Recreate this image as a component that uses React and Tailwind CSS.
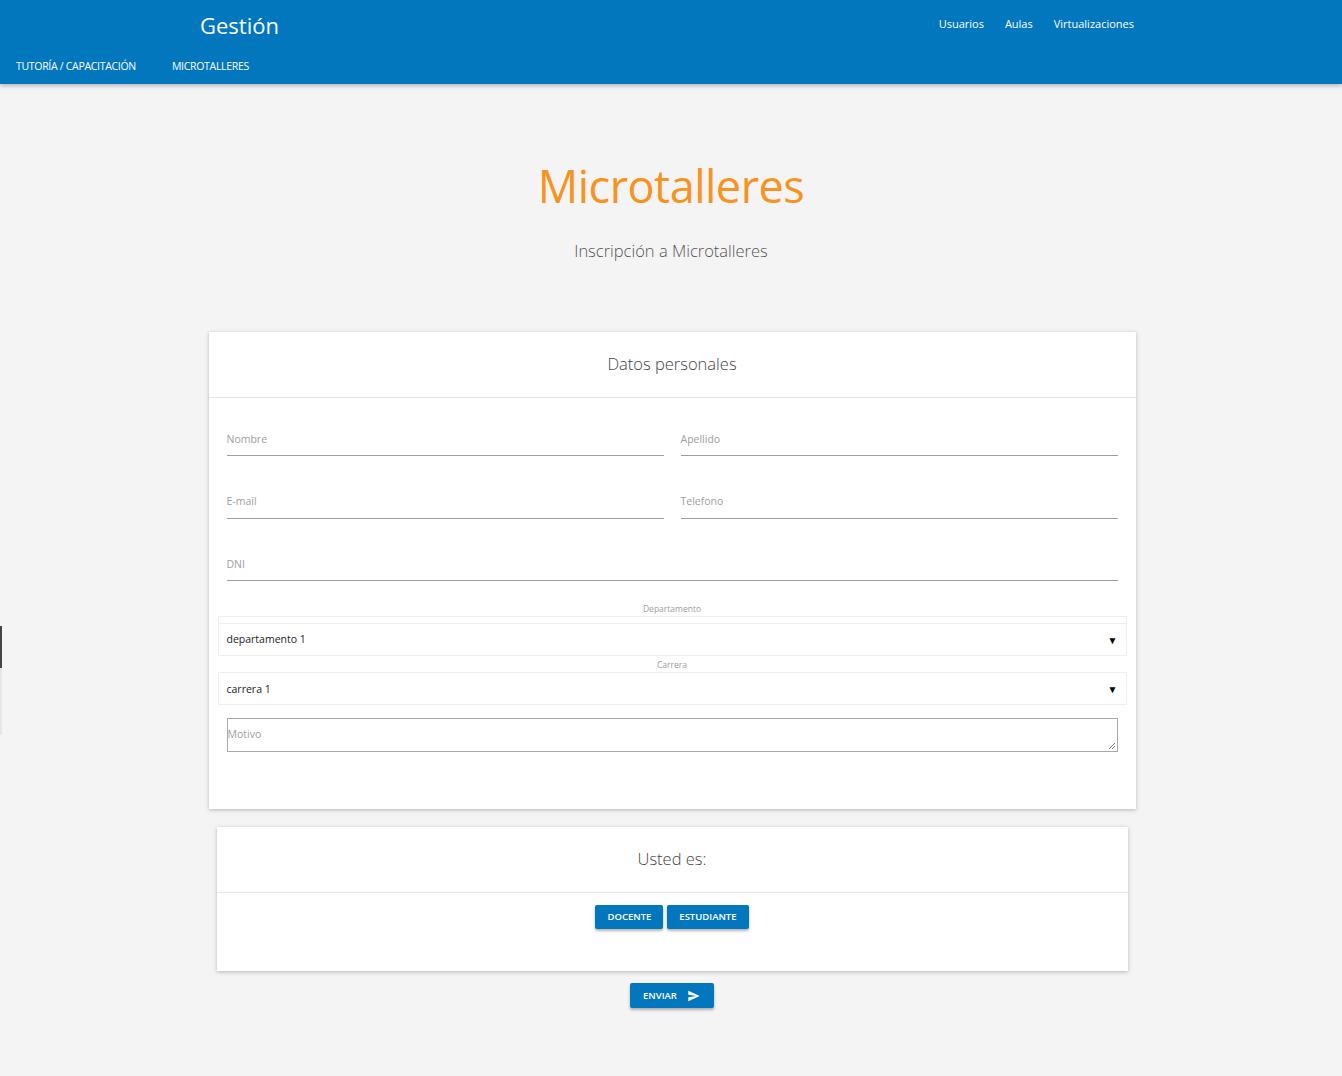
import { IoMdSend } from "react-icons/io";

const font = { fontFamily: '"Open Sans", "Noto Sans", sans-serif' };

const Field = ({ label, className = "" }) => (
  <div className={`flex flex-col ${className}`}>
    <span className="text-[10.5px] text-[#9e9e9e] leading-none pb-[11px] pt-[1px]">{label}</span>
    <div className="border-b border-[#9e9e9e]" />
  </div>
);

const Select = ({ label, value, first }) => (
  <div className="flex flex-col">
    <div className={`text-center text-[8.5px] text-[#9e9e9e] leading-none ${first ? "pb-[2px]" : "pb-[3px]"}`}>{label}</div>
    {first && <div className="h-[7px] mx-[9px] border-t border-x border-[#f0f0f0]" />}
    <div className="mx-[9px] h-[33px] border border-[#eeeeee] flex items-center justify-between px-[8px] pt-[2px]">
      <span className="text-[10.5px] text-[#222]">{value}</span>
      <span className="text-[10px] text-black">▼</span>
    </div>
  </div>
);

export default function App() {
  return (
    <div className="min-h-[1076px] bg-[#f4f4f4] relative" style={font}>
      <header className="bg-[#0277bd] h-[84px] shadow-[0_2px_4px_rgba(0,0,0,0.25)] flex flex-col text-white">
        <div className="flex items-center h-[48px]">
          <div className="w-[200px]" />
          <div className="text-[22px] leading-none pt-[1px]">Gestión</div>
          <div className="flex-1" />
          <nav className="flex gap-[21px] text-[11px] mr-[208px] pt-[1px]">
            <span>Usuarios</span>
            <span>Aulas</span>
            <span>Virtualizaciones</span>
          </nav>
        </div>
        <div className="flex items-center gap-[36px] pl-[16px] text-[10.5px] tracking-[-0.3px] h-[36px] pt-[1px]">
          <span>TUTORÍA / CAPACITACIÓN</span>
          <span>MICROTALLERES</span>
        </div>
      </header>

      <div className="absolute left-0 top-[626px] w-[2px] h-[42px] bg-[#444]" />
      <div className="absolute left-0 top-[668px] w-[2px] h-[67px] bg-[#e6e6e6]" />

      <main className="flex flex-col items-center">
        <h1 className="text-[#f7931e] text-[45px] font-normal leading-none mt-[79px] tracking-[-0.5px]">Microtalleres</h1>
        <p className="text-[#555] text-[16.5px] font-light mt-[31px]">Inscripción a Microtalleres</p>

        <section className="mt-[68px] w-[927px] ml-[2px] bg-white shadow-[0_1px_4px_rgba(0,0,0,0.25)]">
          <div className="h-[66px] flex items-center justify-center border-b border-[#e6e6e6] text-[16.5px] font-light text-[#444]">
            Datos personales
          </div>
          <div className="pt-[35px] pb-[57px] flex flex-col">
            <div className="px-[18px] grid grid-cols-2 gap-x-[17px] gap-y-[39px]">
              <Field label="Nombre" />
              <Field label="Apellido" />
              <Field label="E-mail" />
              <Field label="Telefono" />
              <Field label="DNI" className="col-span-2" />
            </div>
            <div className="mt-[24px] flex flex-col">
              <Select label="Departamento" value="departamento 1" first />
              <div className="h-[5px]" />
              <Select label="Carrera" value="carrera 1" />
            </div>
            <div className="px-[18px] mt-[13px]">
              <div className="h-[34px] border border-[#a9a9a9] relative">
                <span className="absolute left-0 top-[10px] text-[10.5px] text-[#9e9e9e] leading-none">Motivo</span>
                <svg className="absolute right-[1px] bottom-[1px]" width="9" height="9" viewBox="0 0 9 9">
                  <path d="M8 2 L2 8 M8 5 L5 8" stroke="#777" strokeWidth="1" />
                </svg>
              </div>
            </div>
          </div>
        </section>

        <section className="mt-[18px] w-[911px] ml-[2px] bg-white shadow-[0_1px_4px_rgba(0,0,0,0.25)]">
          <div className="h-[66px] flex items-center justify-center border-b border-[#e6e6e6] text-[16.5px] font-light text-[#444]">
            Usted es:
          </div>
          <div className="flex justify-center gap-[4px] pt-[12px] pb-[42px]">
            <button className="h-[24px] px-[12px] bg-[#0277bd] text-white text-[9.5px] font-semibold rounded-[2px] shadow-[0_2px_3px_rgba(0,0,0,0.3)]">
              DOCENTE
            </button>
            <button className="h-[24px] px-[12px] bg-[#0277bd] text-white text-[9.5px] font-semibold rounded-[2px] shadow-[0_2px_3px_rgba(0,0,0,0.3)]">
              ESTUDIANTE
            </button>
          </div>
        </section>

        <button className="mt-[12px] h-[25px] w-[84px] ml-[2px] bg-[#0277bd] text-white text-[9.5px] font-semibold rounded-[2px] shadow-[0_2px_3px_rgba(0,0,0,0.3)] flex items-center justify-center gap-[10px]">
          ENVIAR
          <IoMdSend size={14} />
        </button>
      </main>
    </div>
  );
}
